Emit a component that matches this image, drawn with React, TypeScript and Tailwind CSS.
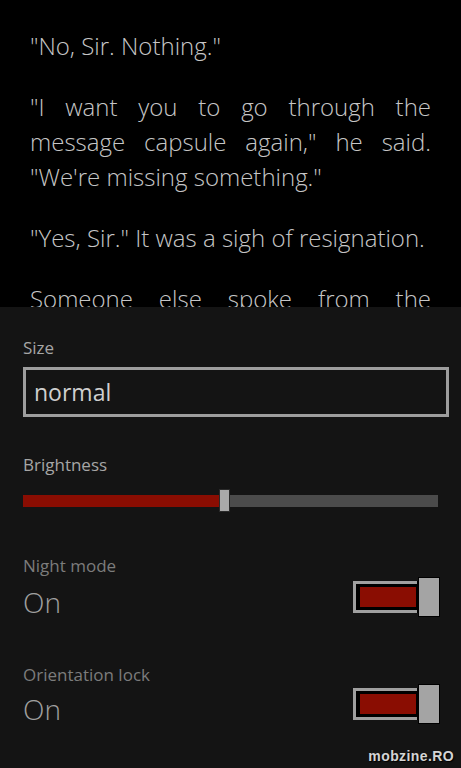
import React from "react";

const font = { fontFamily: '"Open Sans", "Noto Sans", sans-serif' };

function Toggle() {
  return (
    <div className="flex items-center">
      <div className="w-[64px] h-[32px] border-[3px] border-r-0 border-[#a0a0a0] bg-black pl-[4px] pr-[1px] py-[3px]">
        <div className="w-full h-full bg-[#8a0d02]" />
      </div>
      <div className="w-[2px] h-[32px] bg-black" />
      <div className="w-[20px] h-[38px] bg-[#a4a4a4] outline outline-1 outline-black" />
    </div>
  );
}

export default function App() {
  return (
    <div className="w-[461px] h-[768px] flex flex-col bg-black overflow-hidden" style={font}>
      <div className="h-[307px] shrink-0 overflow-hidden bg-black pt-[28px] px-[30px] text-[#c6c6c6] text-[24px] leading-[35px] font-light">
        <p>"No, Sir. Nothing."</p>
        <div className="mt-[26px]">
          <div className="text-justify [text-align-last:justify]">"I want you to go through the</div>
          <div className="text-justify [text-align-last:justify]">message capsule again," he said.</div>
          <div>"We're missing something."</div>
        </div>
        <p className="mt-[26px]">"Yes, Sir." It was a sigh of resignation.</p>
        <div className="mt-[26px] text-justify [text-align-last:justify]">Someone else spoke from the</div>
      </div>

      <div className="flex-1 bg-[#141414] pl-[23px] pr-[12px] pt-[31px] flex flex-col">
        <div className="text-[17px] leading-[20px] text-[#a6a6a6]">Size</div>
        <div className="mt-[9px] h-[50px] border-[3px] border-[#9e9e9e] pl-[8px] text-[23px] leading-[44px] text-[#cfcfcf]">
          normal
        </div>

        <div className="mt-[38px] text-[17px] leading-[20px] text-[#a6a6a6]">Brightness</div>
        <div className="mt-[14px] mr-[11px] h-[23px] flex items-center">
          <div className="w-[196px] h-[12px] bg-[#8a0d02]" />
          <div className="w-[11px] h-[23px] bg-[#a9a9a9] border border-[#2a2a2a]" />
          <div className="flex-1 h-[12px] bg-[#4b4b4b]" />
        </div>

        <div className="mt-[44px] mr-[10px] flex justify-between items-start">
          <div className="flex flex-col">
            <div className="text-[17px] leading-[20px] text-[#7c7c7c]">Night mode</div>
            <div className="mt-[9px] text-[28px] leading-[34px] font-light text-[#a0a0a0]">On</div>
          </div>
          <div className="mt-[22px]">
            <Toggle />
          </div>
        </div>

        <div className="mt-[46px] mr-[10px] flex justify-between items-start">
          <div className="flex flex-col">
            <div className="text-[17px] leading-[20px] text-[#7c7c7c]">Orientation lock</div>
            <div className="mt-[7px] text-[28px] leading-[34px] font-light text-[#a0a0a0]">On</div>
          </div>
          <div className="mt-[20px]">
            <Toggle />
          </div>
        </div>

        <div className="mt-[22px] flex justify-end pr-[-5px]">
          <span
            className="mr-[-5px] text-[14px] leading-[16px] font-bold tracking-[0.4px] text-[#d4d4d4] [text-shadow:1px_1px_1px_#000]"
            style={{ fontFamily: '"Liberation Sans", Arial, sans-serif' }}
          >
            mobzine.RO
          </span>
        </div>
      </div>
    </div>
  );
}
